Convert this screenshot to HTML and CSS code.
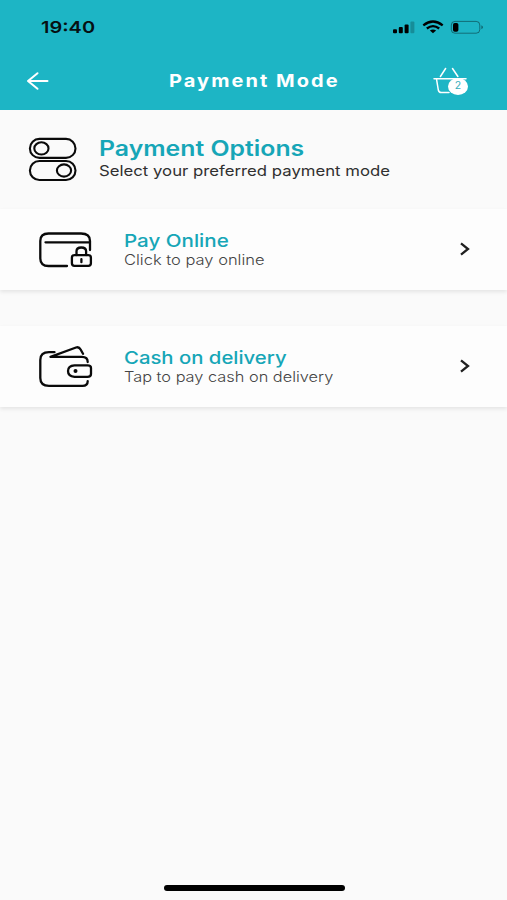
FILE: index.html
```html
<!DOCTYPE html>
<html lang="en">
<head>
<meta charset="utf-8">
<title>Payment Mode</title>
<link rel="stylesheet" href="styles.css">
</head>
<body>
<header class="top">
  <div class="status">
    <span class="time">19:40</span>
    <svg class="signals" width="94" height="16" viewBox="0 0 94 16">
      <rect x="1" y="9.2" width="4" height="4" rx="1"/>
      <rect x="6.8" y="7" width="4" height="6.2" rx="1"/>
      <rect x="12.6" y="4.4" width="4" height="8.8" rx="1"/>
      <rect x="18.4" y="1.5" width="4" height="11.7" rx="1" opacity=".22"/>
      <g fill="none" stroke="#000" stroke-width="2.3">
        <path d="M31.3 5.4Q41 -2.4 50.7 5.4"/>
        <path d="M34.8 8.5Q41 3.7 47.2 8.5"/>
      </g>
      <path d="M37.9 10.5Q41 8.3 44.1 10.5L41 13.3z"/>
      <rect x="59.3" y="1.4" width="28.5" height="11.8" rx="3.6" fill="none" stroke="#000" stroke-opacity=".4"/>
      <rect x="61" y="3" width="5.4" height="8.8" rx="1.8"/>
      <path d="M89.4 5.3q3.2 2 0 4z" opacity=".45"/>
    </svg>
  </div>
  <nav class="bar">
    <svg class="back" width="24" height="20" viewBox="0 0 24 20"><path d="M21.5 10H2M11.5 2.2L2 10l9.5 7.8"/></svg>
    <h1 class="title">Payment Mode</h1>
    <div class="basket">
      <svg width="34" height="28" viewBox="0 0 34 28"><path d="M1 11.8h32M12.6 1.5L7.4 9.5M19.5 1.5l5.4 8M3.5 12l1.8 11q.5 2.5 3 2.5H16"/></svg>
      <span class="badge">2</span>
    </div>
  </nav>
</header>
<main>
  <section class="intro">
    <svg class="toggles" width="50" height="46" viewBox="0 0 50 46">
      <rect x="1.9" y="1.9" width="45.6" height="19" rx="9.5"/>
      <ellipse cx="13.4" cy="11.4" rx="7.1" ry="6.1"/>
      <rect x="1.9" y="24" width="45.6" height="19" rx="9.5"/>
      <ellipse cx="36" cy="33.5" rx="7.1" ry="6.1"/>
    </svg>
    <div class="copy">
      <h2 class="heading"><span class="w-heading">Payment Options</span></h2>
      <p class="sub"><span class="w-sub">Select your preferred payment mode</span></p>
    </div>
  </section>
  <a class="card">
    <svg class="icon" width="54" height="36" viewBox="0 0 54 36">
      <path d="M28 34H9.5Q1.3 34 1.3 26.5V9Q1.3 1.5 9.5 1.5H42Q51 1.5 51 9V18M6.5 10.3H50"/>
      <rect x="32.9" y="23.2" width="19" height="10.6" rx="2.5"/>
      <path d="M37.5 23v-3.8q0-3.7 4.8-3.7t4.8 3.7V23M42.4 27.2v3"/>
    </svg>
    <div class="copy">
      <h3 class="name"><span class="w-online">Pay Online</span></h3>
      <p class="note"><span class="w-click">Click to pay online</span></p>
    </div>
    <svg class="chevron" width="12" height="14" viewBox="0 0 12 14"><path d="M2 1.4L9 7l-7 5.6"/></svg>
  </a>
  <a class="card">
    <svg class="icon" width="54" height="42" viewBox="0 0 54 42">
      <path d="M15.5 6.2H10Q1.3 6.2 1.3 14V32Q1.3 39.8 10 39.8H43.5Q48.7 39.8 48.7 35.2"/>
      <path d="M11.5 10.8L37 1.5Q40 .5 41.6 3.5L44 7.8M11.5 10.8H43Q48.7 10.8 48.7 16"/>
      <path d="M35.5 19.4H48.5Q52 19.4 52 22V28Q52 30.8 48.5 30.8H35.5Q29 30.4 29 25.1T35.5 19.4z"/>
      <circle class="dot" cx="36.5" cy="25" r="2"/>
    </svg>
    <div class="copy">
      <h3 class="name"><span class="w-cash">Cash on delivery</span></h3>
      <p class="note"><span class="w-tap">Tap to pay cash on delivery</span></p>
    </div>
    <svg class="chevron" width="12" height="14" viewBox="0 0 12 14"><path d="M2 1.4L9 7l-7 5.6"/></svg>
  </a>
</main>
<div class="home"></div>
</body>
</html>
```
FILE: styles.css
```css
* { box-sizing: border-box; margin: 0; padding: 0; }
body {
  width: 507px;
  height: 900px;
  overflow: hidden;
  display: flex;
  flex-direction: column;
  background: #fafafa;
  font-family: Inter, "Liberation Sans", sans-serif;
}
.top { height: 110px; background: #1db5c5; }
.status {
  display: flex;
  justify-content: space-between;
  align-items: center;
  height: 54px;
  padding: 0 21px 0 41px;
}
.time {
  font-size: 16.5px;
  font-weight: 600;
  color: #061012;
  transform: scaleX(1.21);
  transform-origin: left;
}
.signals { margin-top: 1px; }
.bar { display: flex; align-items: center; height: 54px; padding: 0 40px 0 26px; }
.back, .basket svg, .toggles, .icon, .chevron {
  fill: none;
  stroke: #fff;
  stroke-width: 2;
  stroke-linecap: round;
  stroke-linejoin: round;
}
.title {
  width: 170px;
  margin: -1px 0 0 119px;
  color: #fff;
  font-size: 17.5px;
  font-weight: 700;
  letter-spacing: 1.8px;
  white-space: nowrap;
  transform: scaleX(1.142);
  transform-origin: left;
}
.basket { position: relative; width: 34px; height: 28px; margin-left: auto; }
.basket svg { stroke-width: 1.5; }
.badge {
  position: absolute;
  left: 15px;
  top: 11px;
  width: 20px;
  height: 17px;
  border-radius: 50%;
  background: #fff;
  color: #35aebc;
  font-size: 10.5px;
  line-height: 15px;
  text-align: center;
}
.intro { display: flex; height: 98.5px; padding: 27px 0 0 28px; }
.toggles, .icon { flex: none; stroke: #0a0a0a; stroke-width: 2.3; }
.toggles { stroke-width: 2.1; }
.icon { margin-top: 1px; }
.dot { fill: #0a0a0a; stroke: none; }
.intro .copy { margin-left: 21px; margin-top: -1px; }
.copy span {
  display: inline-block;
  white-space: nowrap;
  transform-origin: left;
}
.heading { height: 25px; line-height: 25px; font-size: 21px; font-weight: 600; color: #16a6b7; }
.sub { height: 20px; line-height: 20px; font-size: 14.5px; color: #303030; }
.card {
  display: flex;
  align-items: center;
  height: 81px;
  margin-bottom: 36px;
  padding: 0 36px 0 39px;
  background: #fdfdfd;
  box-shadow: 0 2px 4px rgba(0, 0, 0, .09);
}
.card .copy { margin: 2px 0 0 31px; }
.name { height: 20px; line-height: 20px; font-size: 17.5px; font-weight: 500; color: #16a6b7; }
.note { height: 18px; line-height: 18px; font-size: 14.5px; font-weight: 300; color: #444; }
.chevron { margin: -1px 0 0 auto; stroke: #202020; stroke-width: 2.3; stroke-linecap: butt; stroke-linejoin: miter; }
.w-heading { transform: scaleX(1.182); }
.w-sub { transform: scaleX(1.154); }
.w-online { transform: scaleX(1.175); }
.w-click { transform: scaleX(1.137); }
.w-cash { transform: scaleX(1.16); }
.w-tap { transform: scaleX(1.127); }
.home { width: 181px; height: 6px; margin: auto auto 9px 164px; border-radius: 3px; background: #000; }
```
